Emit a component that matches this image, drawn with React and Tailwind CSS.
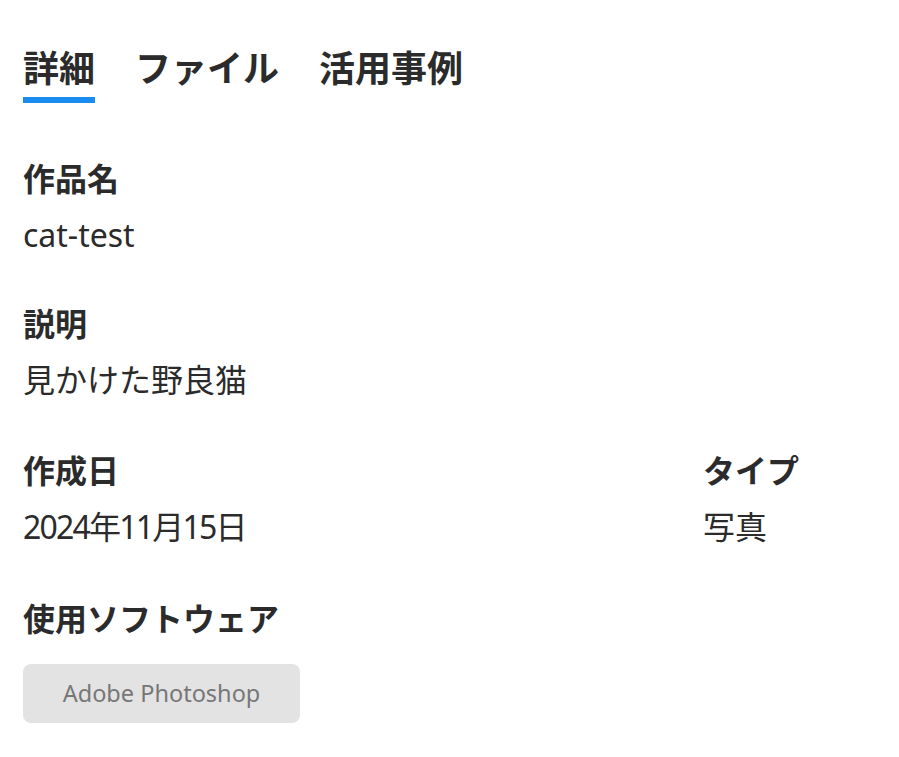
const font = {
  fontFamily: '"Noto Sans", "Noto Sans CJK JP", sans-serif',
};

const Field = ({ label, value, className = "", valueClass = "" }) => (
  <div className={className}>
    <h3 className="text-[32px] leading-[40px] font-bold text-[#2b2b2b]">{label}</h3>
    <p className={`mt-[16px] text-[32px] leading-[40px] text-[#2b2b2b] ${valueClass}`}>{value}</p>
  </div>
);

export default function App() {
  const tabs = ["詳細", "ファイル", "活用事例"];

  return (
    <div className="min-h-screen bg-white pl-[23px] pt-[45px]" style={font}>
      <div className="flex gap-[40px]">
        {tabs.map((t, i) => (
          <div key={t} className="flex flex-col">
            <span className="text-[36px] leading-[48px] font-bold text-[#2b2b2b]">{t}</span>
            <div className={`mt-[4px] h-[6px] ${i === 0 ? "bg-[#1a8cf0]" : "bg-transparent"}`}></div>
          </div>
        ))}
      </div>

      <Field label="作品名" value="cat-test" className="mt-[56px]" />
      <Field label="説明" value="見かけた野良猫" className="mt-[49px]" />

      <div className="mt-[51px] flex">
        <Field label="作成日" value="2024年11月15日" className="w-[680px]" valueClass="tracking-[-1.8px]" />
        <Field label="タイプ" value="写真" />
      </div>

      <h3 className="mt-[52px] text-[32px] leading-[40px] font-bold text-[#2b2b2b]">使用ソフトウェア</h3>
      <div className="mt-[25px] flex h-[59px] w-[277px] items-center justify-center rounded-[8px] bg-[#e3e3e3] text-[23.5px] text-[#777]">
        Adobe Photoshop
      </div>
    </div>
  );
}
